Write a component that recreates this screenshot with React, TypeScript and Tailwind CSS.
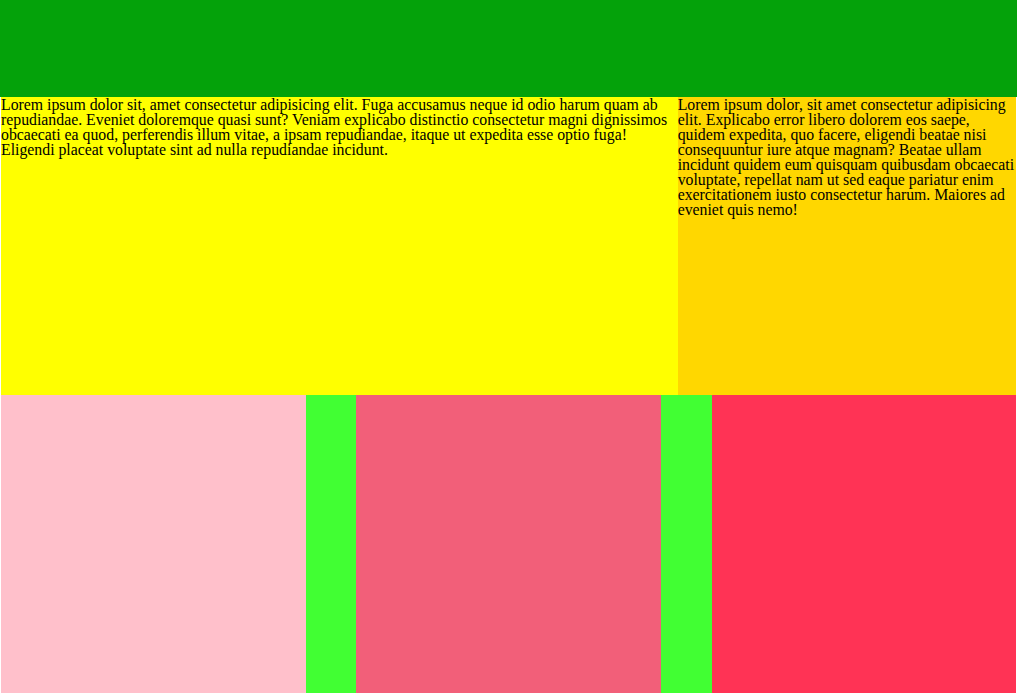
import React from 'react';

export default function App() {
  return (
    <div className="h-[693px] w-full flex flex-col font-['Liberation_Serif',serif] text-[15.8px] leading-[15px] text-black">
      {/* Header */}
      <div className="h-[97px] bg-[#04a20a]" />

      {/* Middle */}
      <div className="h-[298px] flex pl-px pr-px">
        <div className="w-2/3 bg-[#ffff00]">
          Lorem ipsum dolor sit, amet consectetur adipisicing elit. Fuga accusamus neque id odio harum quam ab
          repudiandae. Eveniet doloremque quasi sunt? Veniam explicabo distinctio consectetur magni dignissimos
          obcaecati ea quod, perferendis illum vitae, a ipsam repudiandae, itaque ut expedita esse optio fuga!
          Eligendi placeat voluptate sint ad nulla repudiandae incidunt.
        </div>
        <div className="w-1/3 bg-[#ffd700]">
          Lorem ipsum dolor, sit amet consectetur adipisicing elit. Explicabo error libero dolorem eos saepe,
          quidem expedita, quo facere, eligendi beatae nisi consequuntur iure atque magnam? Beatae ullam
          incidunt quidem eum quisquam quibusdam obcaecati voluptate, repellat nam ut sed eaque pariatur enim
          exercitationem iusto consectetur harum. Maiores ad eveniet quis nemo!
        </div>
      </div>

      {/* Bottom */}
      <div className="flex-1 flex pl-px pr-px">
        <div className="w-[30%] bg-[#ffc0cb]" />
        <div className="w-[5%] bg-[#41ff33]" />
        <div className="w-[30%] bg-[#f25f79]" />
        <div className="w-[5%] bg-[#41ff33]" />
        <div className="w-[30%] bg-[#ff3355]" />
      </div>
    </div>
  );
}
